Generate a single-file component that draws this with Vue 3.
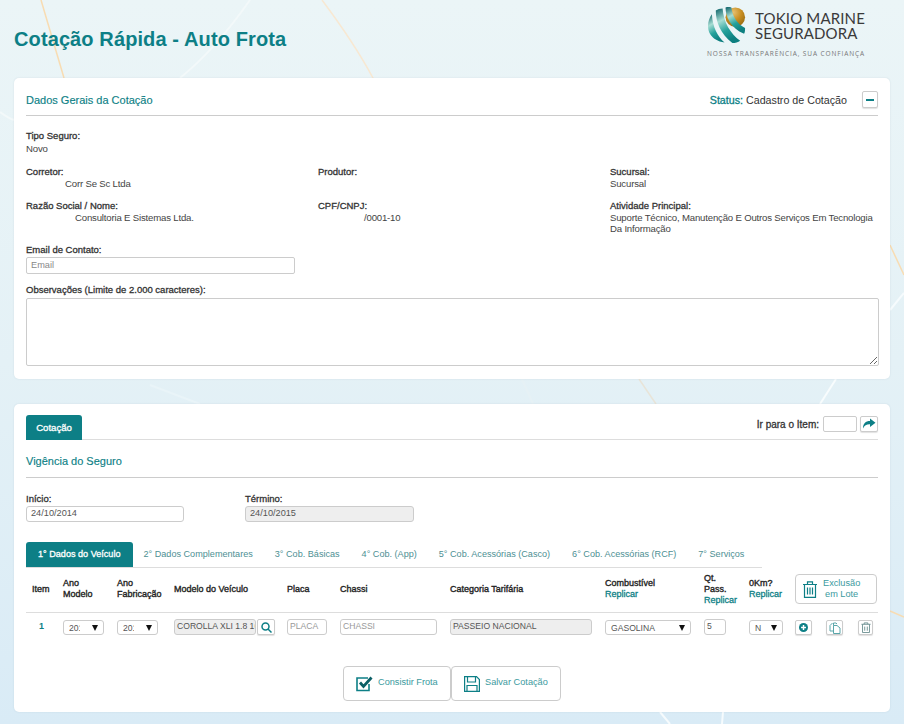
<script setup>
const infoRows = [
  [
    { label: 'Corretor:', value: 'Corr Se Sc Ltda', indent: 39 },
    { label: 'Produtor:', value: '' },
    { label: 'Sucursal:', value: 'Sucursal' }
  ],
  [
    { label: 'Razão Social / Nome:', value: 'Consultoria E Sistemas Ltda.', indent: 49 },
    { label: 'CPF/CNPJ:', value: '/0001-10', indent: 46 },
    { label: 'Atividade Principal:', value: 'Suporte Técnico, Manutenção E Outros Serviços Em Tecnologia Da Informação' }
  ]
]

const steps = [
  '1° Dados do Veículo',
  '2° Dados Complementares',
  '3° Cob. Básicas',
  '4° Cob. (App)',
  '5° Cob. Acessórias (Casco)',
  '6° Cob. Acessórias (RCF)',
  '7° Serviços'
]
</script>

<template>
  <div class="page">
    <svg class="bg-lines" width="904" height="724" viewBox="0 0 904 724" fill="none">
      <path d="M41 0 L64 78" stroke="#f8dcb2" stroke-width="1.5" />
      <path d="M322 0 C340 24 358 50 373 78" stroke="#f8e8d2" stroke-width="1.5" />
      <path d="M250 0 Q215 50 180 78" stroke="#f3f9fa" stroke-width="2" />
      <path d="M0 112 Q8 118 14 120" stroke="#f3f9fa" stroke-width="2" />
      <path d="M890 245 L904 275" stroke="#f8dcb2" stroke-width="1.5" />
      <path d="M890 310 L904 293" stroke="#f6fbfd" stroke-width="2" />
      <path d="M890 611 L904 617" stroke="#f8dcb2" stroke-width="1.5" />
      <path d="M639 379 L656 404" stroke="#e8e4d8" stroke-width="1.5" />
      <path d="M522 379 L533 404" stroke="#e6f1f5" stroke-width="2" />
      <path d="M150 385 L200 404" stroke="#e9f4f8" stroke-width="2" />
      <path d="M836 379 L820 404" stroke="#f8fcfd" stroke-width="2" />
      <path d="M660 712 L670 724 M723 712 L722 724" stroke="#f6fbfd" stroke-width="2" />
    </svg>

    <header class="top">
      <h1>Cotação Rápida - Auto Frota</h1>
      <div class="logo">
        <div class="logo-main">
          <svg width="40" height="40" viewBox="0 0 40 40">
            <defs>
              <radialGradient id="ball" cx="0.4" cy="0.25" r="0.8">
                <stop offset="0" stop-color="#e6c070" />
                <stop offset="0.5" stop-color="#c98f22" />
                <stop offset="1" stop-color="#96690f" />
              </radialGradient>
              <linearGradient id="band" x1="0" y1="0" x2="0.35" y2="1">
                <stop offset="0" stop-color="#0a5f66" />
                <stop offset="0.38" stop-color="#a6ddd3" />
                <stop offset="0.7" stop-color="#25a19b" />
                <stop offset="1" stop-color="#0d7f80" />
              </linearGradient>
            </defs>
            <circle cx="29" cy="11" r="10" fill="url(#ball)" />
            <path d="M5 8 C1 13 -0.5 22 3 28 C6 33 11 36 18 37 C11 31 6 22 5 8 Z" fill="url(#band)" />
            <path d="M9 4 C9 16 14 28 26 37.5 C29 37.5 32 36.5 34 35 C24 28 17 16 16 2 C13 2 11 3 9 4 Z" fill="url(#band)" />
            <path d="M19 1 C19 10 24 22 38 28 C39 26 39 24 39 22 C31 18 26 10 25 1 C23 0.5 21 0.5 19 1 Z" fill="url(#band)" />
          </svg>
          <div class="logo-name">
            <div>TOKIO MARINE</div>
            <div>SEGURADORA</div>
          </div>
        </div>
        <div class="logo-slogan">NOSSA TRANSPARÊNCIA, SUA CONFIANÇA</div>
      </div>
    </header>

    <section class="card general">
      <div class="card-head">
        <h2>Dados Gerais da Cotação</h2>
        <div class="status">
          <span><b>Status:</b> Cadastro de Cotação</span>
          <button class="small-btn collapse"><i></i></button>
        </div>
      </div>

      <div class="field single">
        <label>Tipo Seguro:</label>
        <p>Novo</p>
      </div>

      <div v-for="(row, i) in infoRows" :key="i" class="info-row">
        <div v-for="item in row" :key="item.label" class="field">
          <label>{{ item.label }}</label>
          <p :style="item.indent ? { paddingLeft: `${item.indent}px` } : null">{{ item.value }}</p>
        </div>
      </div>

      <div class="field email">
        <label>Email de Contato:</label>
        <input class="text-input" placeholder="Email" />
      </div>

      <div class="field obs">
        <label>Observações (Limite de 2.000 caracteres):</label>
        <textarea></textarea>
      </div>
    </section>

    <section class="card quote">
      <div class="tab-line">
        <div class="tab">Cotação</div>
        <div class="goto">
          <label>Ir para o Item:</label>
          <input class="goto-input" />
          <button class="small-btn goto-btn">
            <svg width="14" height="12" viewBox="0 0 14 12"><path d="M8 0.5 L13.5 4.8 L8 9 V6.3 C4.5 6.2 2.5 7.5 1 10.5 C1 5.5 3.5 3 8 3 Z" fill="#0d7f86" /></svg>
          </button>
        </div>
      </div>

      <h2 class="section-title">Vigência do Seguro</h2>

      <div class="dates">
        <div class="date">
          <label>Início:</label>
          <div class="box">24/10/2014</div>
        </div>
        <div class="date">
          <label>Término:</label>
          <div class="box disabled">24/10/2015</div>
        </div>
      </div>

      <nav class="steps">
        <a v-for="(step, i) in steps" :key="step" :class="{ active: i === 0 }">{{ step }}</a>
      </nav>

      <div class="grid grid-head">
        <b class="mid">Item</b>
        <b>Ano<br />Modelo</b>
        <b>Ano<br />Fabricação</b>
        <b class="mid">Modelo do Veículo</b>
        <b class="mid">Placa</b>
        <b class="mid">Chassi</b>
        <b class="mid">Categoria Tarifária</b>
        <b>Combustível<br /><em>Replicar</em></b>
        <b>Qt.<br />Pass.<br /><em>Replicar</em></b>
        <b>0Km?<br /><em>Replicar</em></b>
        <button class="lot-btn">
          <svg width="14" height="17" viewBox="0 0 14 17" fill="none" stroke="#0d7f86" stroke-width="1.2">
            <path d="M0 3.5 H14 M4.5 3.5 V0.8 H9.5 V3.5" />
            <path d="M1.5 3.5 V16.4 H12.5 V3.5" />
            <path d="M4.5 6.5 V13.5 M7 6.5 V13.5 M9.5 6.5 V13.5" />
          </svg>
          <span>Exclusão<br />em Lote</span>
        </button>
      </div>

      <div class="grid grid-row">
        <span class="item-no">1</span>
        <div class="sel w42"><span class="cut">2014</span><i></i></div>
        <div class="sel w42"><span class="cut">2014</span><i></i></div>
        <div class="model">
          <div class="box disabled clip">COROLLA XLI 1.8 16V</div>
          <button class="small-btn search">
            <svg width="11" height="11" viewBox="0 0 11 11" fill="none" stroke="#0d7f86" stroke-width="1.5"><circle cx="4.5" cy="4.5" r="3.5" /><path d="M7 7 L10.5 10.5" /></svg>
          </button>
        </div>
        <div class="box ph w40">PLACA</div>
        <div class="box ph w97">CHASSI</div>
        <div class="box disabled w142">PASSEIO NACIONAL</div>
        <div class="sel w86"><span>GASOLINA</span><i></i></div>
        <div class="box w22">5</div>
        <div class="sel w34"><span>N</span><i></i></div>
        <div class="row-actions">
          <button class="small-btn act">
            <svg width="9" height="9" viewBox="0 0 11 11"><circle cx="5.5" cy="5.5" r="5.5" fill="#0d7f86" /><path d="M5.5 2.5 V8.5 M2.5 5.5 H8.5" stroke="#fff" stroke-width="1.8" /></svg>
          </button>
          <button class="small-btn act">
            <svg width="12" height="12" viewBox="0 0 12 12" fill="none" stroke="#5aa6aa"><path d="M4.5 3.5 V1 H7 L8 2 M4.5 3.5 H8 L11 6 V11.5 H4.5 Z M4.5 9 H1 V3.5 L3.5 1" /></svg>
          </button>
          <button class="small-btn act thin">
            <svg width="10" height="11" viewBox="0 0 10 12" fill="none" stroke="#6b8f90"><path d="M0 2.5 H10 M3 2.5 V1 H7 V2.5 M1.2 2.5 V11.5 H8.8 V2.5 M3.6 5 V9.5 M6.4 5 V9.5" /></svg>
          </button>
        </div>
      </div>

      <div class="footer-btns">
        <button class="big-btn">
          <svg width="17" height="16" viewBox="0 0 17 16" fill="none">
            <path d="M13 8 V14.5 H1 V2 H12" stroke="#0d7f86" stroke-width="1.6" />
            <path d="M4 6.5 L7.5 10.5 L15.5 1.5" stroke="#0b5f66" stroke-width="2.8" />
          </svg>
          <span>Consistir Frota</span>
        </button>
        <button class="big-btn save">
          <svg width="16" height="16" viewBox="0 0 16 16" fill="none" stroke="#0d7f86" stroke-width="1.2">
            <path d="M0.6 0.6 H12.5 L15.4 3.5 V15.4 H0.6 Z" />
            <path d="M3.5 0.6 V6 H11.5 V0.6 M3 15.4 V9.5 H13 V15.4" />
          </svg>
          <span>Salvar Cotação</span>
        </button>
      </div>
    </section>
  </div>
</template>

<style>
html,
body {
  margin: 0;
  overflow: hidden;
}
</style>

<style scoped>
.page {
  position: relative;
  width: 904px;
  height: 724px;
  overflow: hidden;
  padding: 0 14px;
  box-sizing: border-box;
  font-family: "Liberation Sans", Arial, sans-serif;
  font-size: 9.2px;
  color: #333;
  background: linear-gradient(180deg, #ebf5f7 0%, #e4f1f6 50%, #d9ebf6 100%);
}

.bg-lines {
  position: absolute;
  left: 0;
  top: 0;
}

.top,
.card {
  position: relative;
}

.top {
  display: flex;
  justify-content: space-between;
  height: 78px;
}

h1 {
  margin: 27px 0 0;
  font-size: 20px;
  line-height: 24px;
  font-weight: 700;
  letter-spacing: 0.11px;
  color: #0d7f86;
}

.logo {
  margin: 6px 25px 0 0;
  width: 158px;
}

.logo-main {
  display: flex;
  align-items: flex-start;
  gap: 9px;
  height: 42px;
}

.logo-name {
  margin-top: 5px;
  font-family: Lato, sans-serif;
  font-size: 15px;
  line-height: 15px;
  color: #3a3a3a;
  letter-spacing: 0.15px;
  white-space: nowrap;
}

.logo-slogan {
  margin-top: 1px;
  font-family: "Open Sans", sans-serif;
  font-size: 6.5px;
  line-height: 9px;
  letter-spacing: 0.9px;
  color: #777;
  white-space: nowrap;
}

.card {
  background: #fff;
  border-radius: 5px;
  padding: 0 12px;
  box-sizing: border-box;
  box-shadow: 0 0 2px rgba(120, 150, 160, 0.2);
}

.general {
  height: 301px;
}

.quote {
  margin-top: 25px;
  height: 308px;
}

.card-head {
  display: flex;
  justify-content: space-between;
  align-items: center;
  height: 31px;
  padding-top: 6px;
  border-bottom: 1px solid #ccc;
  margin-bottom: 14px;
}

h2 {
  margin: 0;
  font-size: 11px;
  font-weight: 400;
  -webkit-text-stroke: 0.15px #0d7f86;
  color: #0d7f86;
}

.status {
  display: flex;
  align-items: center;
  gap: 15px;
  font-size: 10.7px;
  color: #333;
}

.status b {
  font-weight: 400;
  -webkit-text-stroke: 0.3px #0d7f86;
  color: #0d7f86;
}

.small-btn {
  display: flex;
  align-items: center;
  justify-content: center;
  padding: 0;
  background: #fff;
  border: 1px solid #ccc;
  border-radius: 2px;
  box-shadow: 0 1px 1px rgba(0, 0, 0, 0.12);
}

.collapse {
  width: 16px;
  height: 17px;
}

.collapse i {
  width: 8px;
  height: 2px;
  background: #0d7f86;
}

.field label,
.date label {
  display: block;
  font-size: 9.5px;
  line-height: 12px;
  font-weight: 400;
  -webkit-text-stroke: 0.3px #333;
  color: #333;
}

.field p {
  margin: 0;
  font-size: 9.6px;
  letter-spacing: -0.18px;
  line-height: 11px;
  color: #444;
}

.single {
  height: 36px;
}

.single p {
  padding-top: 1px;
}

.info-row {
  display: grid;
  grid-template-columns: repeat(3, 292px);
  height: 34px;
}

.info-row .field p {
  max-width: 268px;
}

.email {
  height: 40px;
  margin-top: 10px;
}

.text-input {
  display: block;
  box-sizing: border-box;
  width: 269px;
  height: 17px;
  margin-top: 1px;
  padding: 0 4px 1px;
  border: 1px solid #ccc;
  border-radius: 2px;
  font: 9.2px "Liberation Sans", Arial, sans-serif;
}

.text-input::placeholder {
  color: #888;
}

.obs textarea {
  display: block;
  box-sizing: border-box;
  width: 853px;
  height: 68px;
  margin-top: 2px;
  border: 1px solid #ccc;
  border-radius: 2px;
}

.tab-line {
  display: flex;
  justify-content: space-between;
  align-items: flex-end;
  height: 35px;
  border-bottom: 1px solid #ddd;
}

.tab {
  width: 56px;
  height: 25px;
  margin-bottom: -1px;
  line-height: 25px;
  text-align: center;
  font-size: 9.6px;
  -webkit-text-stroke: 0.3px #fff;
  color: #fff;
  background: #0d7f86;
  border-radius: 3px 3px 0 0;
}

.goto {
  display: flex;
  align-items: center;
  gap: 3px;
  align-self: flex-start;
  margin-top: 12px;
}

.goto label {
  font-size: 10px;
  -webkit-text-stroke: 0.3px #333;
  color: #333;
  margin-right: 1px;
}

.goto-input {
  box-sizing: border-box;
  width: 34px;
  height: 16px;
  border: 1px solid #ccc;
  border-radius: 2px;
}

.goto-btn {
  width: 18px;
  height: 16px;
}

.section-title {
  height: 37px;
  line-height: 43px;
  border-bottom: 1px solid #ccc;
  margin-bottom: 15px;
}

.dates {
  display: flex;
  gap: 61px;
}

.date {
  width: 158px;
}

.date .box {
  margin-top: 1px;
  width: 158px;
}

.date:nth-child(2) .box {
  width: 169px;
}

.box {
  box-sizing: border-box;
  height: 16px;
  line-height: 13px;
  padding: 0 4px;
  border: 1px solid #ccc;
  border-radius: 3px;
  background: #fff;
  color: #555;
  white-space: nowrap;
}

.box.disabled {
  background: #eee;
  color: #555;
}

.box.ph {
  color: #999;
  padding: 0 2px;
}

.grid-row .box {
  font-size: 8.6px;
}

.steps {
  display: flex;
  width: 736px;
  height: 25px;
  margin-top: 20px;
  border-bottom: 1px solid #ddd;
}

.steps a {
  line-height: 25px;
  padding: 0 11px;
  font-size: 9.1px;
  color: #4d8f93;
  white-space: nowrap;
}

.steps a.active {
  padding: 0 12px;
  -webkit-text-stroke: 0.3px #fff;
  color: #fff;
  background: #0d7f86;
  border-radius: 3px 3px 0 0;
}

.grid {
  display: grid;
  grid-template-columns: 31px 54px 57px 113px 53px 110px 155px 99px 45px 46px 82px;
  padding-left: 6px;
  border-bottom: 1px solid #ddd;
}

.grid-head {
  box-sizing: border-box;
  height: 45px;
  padding-bottom: 2px;
  align-items: center;
}

.grid-head b {
  font-size: 9px;
  line-height: 11px;
  font-weight: 400;
  -webkit-text-stroke: 0.35px #222;
  color: #222;
}

.grid-head em {
  font-style: normal;
  -webkit-text-stroke: 0.3px #0d7f86;
  color: #0d7f86;
}

.lot-btn {
  display: flex;
  align-items: center;
  gap: 6px;
  box-sizing: border-box;
  width: 82px;
  height: 30px;
  padding: 0 0 0 7px;
  background: #fff;
  border: 1px solid #ccc;
  border-radius: 4px;
  font: 9.2px/11px "Liberation Sans", Arial, sans-serif;
  color: #3b9a9e;
}

.grid-row {
  border-bottom: 0;
  padding-top: 6px;
  height: 46px;
  box-sizing: border-box;
  align-items: start;
}

.item-no {
  padding: 2px 0 0 7px;
  font-size: 9px;
  font-weight: 700;
  color: #0d7f86;
}

.sel {
  box-sizing: border-box;
  display: flex;
  align-items: center;
  justify-content: space-between;
  height: 15px;
  margin-top: 1px;
  padding: 0 5px;
  border: 1px solid #ccc;
  border-radius: 3px;
  font-size: 8.6px;
  color: #555;
  overflow: hidden;
}

.sel i {
  width: 0;
  height: 0;
  border-left: 3px solid transparent;
  border-right: 3px solid transparent;
  border-top: 6px solid #111;
}

.cut {
  width: 11px;
  overflow: hidden;
}

.w42 { width: 41px; }
.w86 { width: 86px; }
.w34 { width: 34px; }
.w40 { width: 40px; }
.w97 { width: 97px; }
.w142 { width: 142px; }
.w22 { width: 22px; }

.w22 {
  padding: 0 2px;
}

.model {
  display: flex;
  gap: 1px;
}

.clip {
  flex: none;
  width: 82px;
  overflow: hidden;
  padding: 0 2px;
}

.search {
  flex: none;
  width: 18px;
  height: 16px;
}

.w142 {
  padding: 0 2px;
}

.row-actions {
  display: flex;
  gap: 14px;
  padding-top: 1px;
}

.act {
  flex: none;
  width: 17px;
  height: 15px;
}

.act.thin {
  width: 15px;
  margin-left: 1px;
}

.footer-btns {
  display: flex;
  justify-content: center;
  margin-top: 7px;
}

.big-btn {
  display: flex;
  align-items: center;
  gap: 5px;
  box-sizing: border-box;
  width: 108px;
  height: 35px;
  padding: 0 0 0 12px;
  background: #fff;
  border: 1px solid #ccc;
  border-radius: 4px;
  font: 9.2px "Liberation Sans", Arial, sans-serif;
  color: #3b9a9e;
}

.big-btn span {
  margin-top: -4px;
}

.big-btn.save {
  width: 110px;
}
</style>
